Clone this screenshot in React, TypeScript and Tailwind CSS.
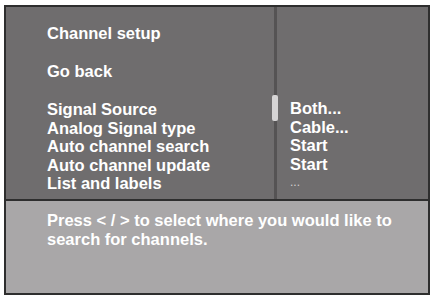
import React from "react";

const rows: [string, string][] = [
  ["Signal Source", "Both..."],
  ["Analog Signal type", "Cable..."],
  ["Auto channel search", "Start"],
  ["Auto channel update", "Start"],
  ["List and labels", "..."],
];

export default function App() {
  return (
    <div
      className="w-[434px] h-[298px] bg-white pt-[5px] pl-[4px]"
      style={{ fontFamily: '"Liberation Sans", Arial, sans-serif' }}
    >
      <div className="w-[426px] h-[290px] border-2 border-[#2e2e2e] flex flex-col bg-[#6f6d6e]">
        <div className="flex h-[194px] border-b-2 border-[#2e2e2e]">
          <div className="w-[268px] pl-[41px] pt-[17px] text-white font-bold text-[16.5px] leading-[18.5px]">
            <div>Channel setup</div>
            <div className="mt-[19px]">Go back</div>
            <div className="mt-[20px]">
              {rows.map(([l]) => (
                <div key={l}>{l}</div>
              ))}
            </div>
          </div>
          <div className="relative w-[3px] bg-[#555354]">
            <div className="absolute left-[-2px] top-[88px] w-[6px] h-[26px] rounded-[2px] bg-[#d6d4d5]" />
          </div>
          <div className="flex-1 pl-[13px] pt-[92px] text-white font-bold text-[16.5px] leading-[18.5px]">
            {rows.map(([l, v]) =>
              v === "..." ? (
                <div key={l} className="text-[#cfcdce] text-[12px] font-normal">
                  ...
                </div>
              ) : (
                <div key={l}>{v}</div>
              )
            )}
          </div>
        </div>
        <div className="flex-1 bg-[#a9a7a8] pl-[41px] pt-[10px] text-white font-bold text-[16.5px] leading-[18.5px]">
          <div>Press &lt; / &gt; to select where you would like to</div>
          <div>search for channels.</div>
        </div>
      </div>
    </div>
  );
}
